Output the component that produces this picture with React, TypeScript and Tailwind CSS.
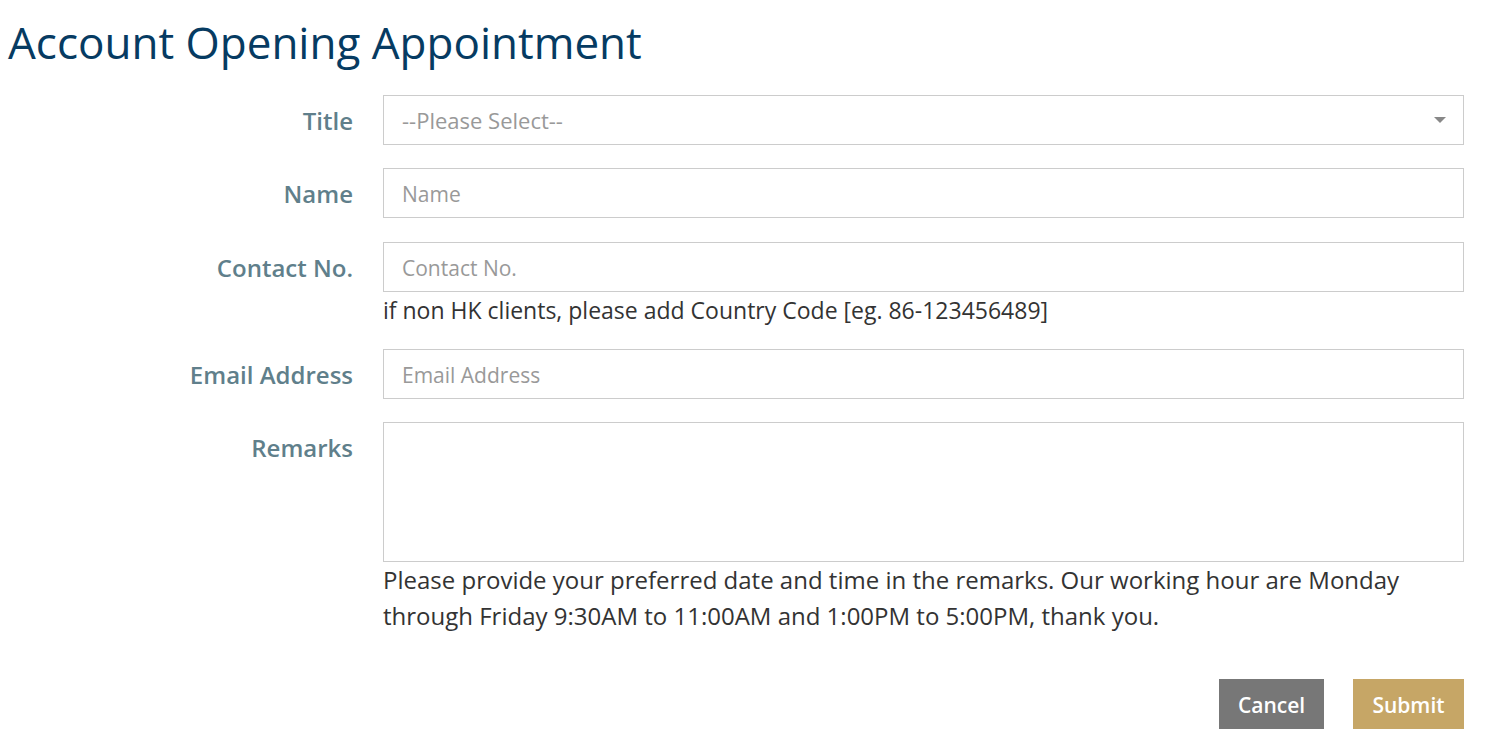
import React from "react";

const font = { fontFamily: '"Open Sans", "Noto Sans", sans-serif' };

function Label({ children }: { children: React.ReactNode }) {
  return (
    <div className="w-[353px] shrink-0 h-[50px] pt-[2px] flex items-center justify-end text-[24px] font-semibold text-[#607f8b]">
      {children}
    </div>
  );
}

const inputCls =
  "w-full h-[50px] border border-[#cccccc] bg-white px-[18px] pt-[2px] text-[21px] text-[#555] placeholder:text-[#999999] outline-none";

export default function App() {
  return (
    <div className="bg-white min-h-[756px] w-full text-[#333]" style={font}>
      <h1 className="pl-[8px] pt-[14px] h-[95px] text-[44px] leading-[56px] font-normal text-[#063b62]">
        Account Opening Appointment
      </h1>
      <form className="flex flex-col pr-[23px]" onSubmit={(e) => e.preventDefault()}>
        <div className="flex gap-[30px] mb-[23px]">
          <Label>Title</Label>
          <div className="flex-1 relative">
            <div className="w-full h-[50px] border border-[#cccccc] bg-white pl-[18px] flex items-center text-[22px] text-[#999999]">
              --Please Select--
            </div>
            <svg className="absolute right-[18px] top-[22px]" width="12" height="6" viewBox="0 0 12 6">
              <path d="M0 0 L12 0 L6 6 Z" fill="#888888" />
            </svg>
          </div>
        </div>
        <div className="flex gap-[30px] mb-[24px]">
          <Label>Name</Label>
          <div className="flex-1">
            <input className={inputCls} placeholder="Name" style={font} />
          </div>
        </div>
        <div className="flex gap-[30px] mb-[21px]">
          <Label>Contact No.</Label>
          <div className="flex-1">
            <input className={inputCls} placeholder="Contact No." style={font} />
            <div className="text-[23px] leading-[36px] text-[#333]">
              if non HK clients, please add Country Code [eg. 86-123456489]
            </div>
          </div>
        </div>
        <div className="flex gap-[30px] mb-[23px]">
          <Label>Email Address</Label>
          <div className="flex-1">
            <input className={inputCls} placeholder="Email Address" style={font} />
          </div>
        </div>
        <div className="flex gap-[30px]">
          <Label>Remarks</Label>
          <div className="flex-1">
            <textarea className="w-full h-[140px] block border border-[#cccccc] bg-white px-[18px] py-[10px] text-[21px] outline-none resize-none" style={font} />
            <div className="text-[24px] leading-[36px] text-[#333]">
              Please provide your preferred date and time in the remarks. Our working hour are Monday
              <br />
              through Friday 9:30AM to 11:00AM and 1:00PM to 5:00PM, thank you.
            </div>
          </div>
        </div>
        <div className="flex justify-end gap-[29px] mt-[45px]">
          <button type="button" className="w-[105px] h-[50px] pt-[3px] bg-[#777777] text-white text-[21px] font-semibold" style={font}>
            Cancel
          </button>
          <button type="submit" className="w-[111px] h-[50px] pt-[3px] bg-[#c6a666] text-white text-[21px] font-semibold" style={font}>
            Submit
          </button>
        </div>
      </form>
    </div>
  );
}
